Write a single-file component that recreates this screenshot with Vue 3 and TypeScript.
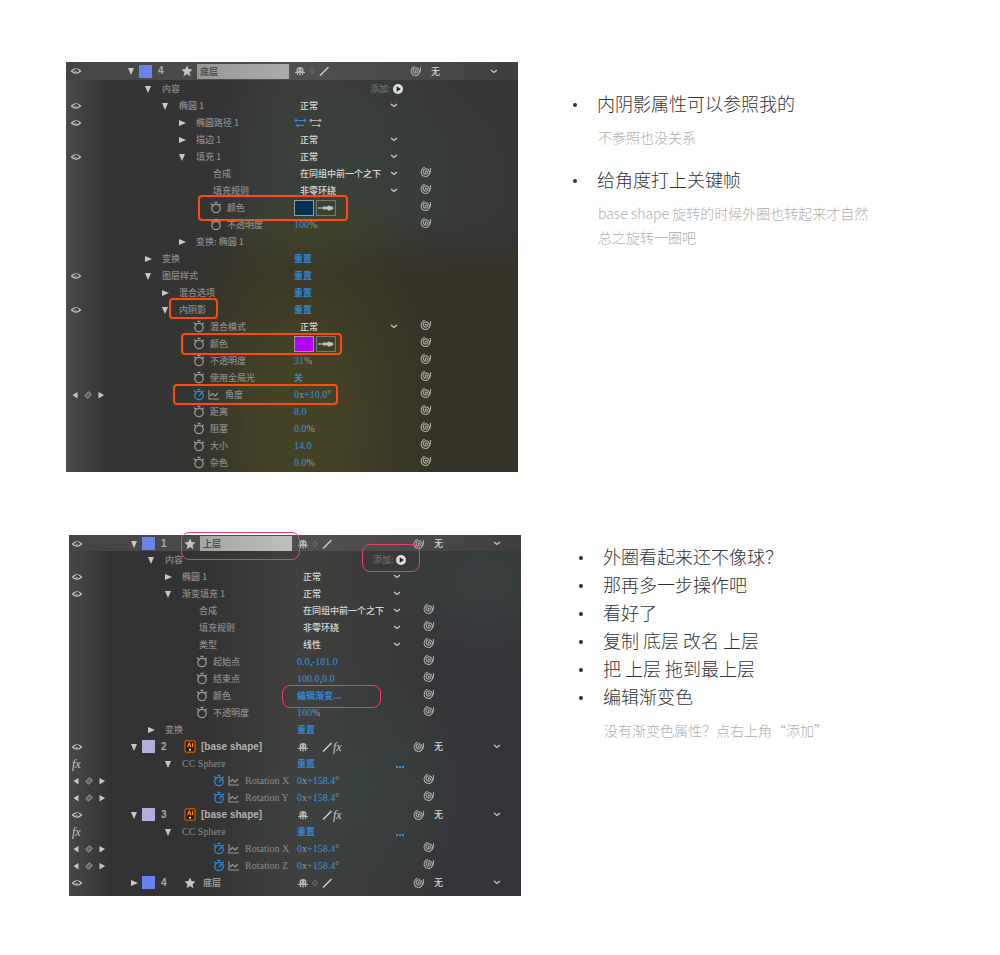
<script setup lang="ts">
interface Row {
  kind: 'layer' | 'prop'
  label: string
  level?: number
  eye?: boolean
  fx?: boolean
  keys?: boolean
  arrow?: 'open' | 'closed'
  watch?: 'off' | 'on'
  value?: string
  valueKind?: 'select' | 'link' | 'number' | 'color' | 'path' | 'add'
  color?: 'navy' | 'purple'
  spiral?: boolean
  dots?: boolean
  latin?: boolean
  mark?: string
  num?: string
  icon?: 'star' | 'ai'
  swatch?: 'blue' | 'lavender'
  field?: boolean
  faint?: boolean
}

interface Run { text: string; unit: boolean }

const spiralPath = 'M6 6.300c-.8.300-1.200-.9-.2-1.200 1.500-.4 2.400 1.800.8 2.700-1.900 1-3.900-.8-3.400-2.800.5-1.900 3-2.700 4.700-1.500 2 1.400 1.900 4.700-.1 6.200-2 1.400-5.200.8-6.300-1.600C.4 5.500 1.900 2 4.800 1.300M8.500 9c1.600-1.400 2.400-3.800 2-7'

const prop = (level: number, label: string, more: Partial<Row> = {}): Row => ({ kind: 'prop', level, label, ...more })
const layer = (num: string, label: string, more: Partial<Row> = {}): Row => ({ kind: 'layer', num, label, eye: true, ...more })
const sel = (value: string): Partial<Row> => ({ valueKind: 'select', value })
const link = (value: string): Partial<Row> => ({ valueKind: 'link', value })
const num = (value: string): Partial<Row> => ({ valueKind: 'number', value, watch: 'off', spiral: true })

const base: Row[] = [
  layer('4', '底层', { arrow: 'open', icon: 'star', swatch: 'blue', field: true, faint: true }),
  prop(1, '内容', { arrow: 'open', valueKind: 'add' }),
  prop(2, '椭圆 1', { eye: true, arrow: 'open', ...sel('正常') }),
  prop(3, '椭圆路径 1', { eye: true, arrow: 'closed', valueKind: 'path' }),
  prop(3, '描边 1', { arrow: 'closed', ...sel('正常') }),
  prop(3, '填充 1', { eye: true, arrow: 'open', ...sel('正常') }),
  prop(4, '合成', { ...sel('在同组中前一个之下'), spiral: true }),
  prop(4, '填充规则', { ...sel('非零环绕'), spiral: true }),
  prop(4, '颜色', { watch: 'off', valueKind: 'color', color: 'navy', spiral: true, mark: 'm-fill' }),
  prop(4, '不透明度', num('100%')),
  prop(3, '变换: 椭圆 1', { arrow: 'closed' }),
  prop(1, '变换', { arrow: 'closed', ...link('重置') }),
  prop(1, '图层样式', { eye: true, arrow: 'open', ...link('重置') }),
  prop(2, '混合选项', { arrow: 'closed', ...link('重置') }),
  prop(2, '内阴影', { eye: true, arrow: 'open', ...link('重置'), mark: 'm-shadow' }),
  prop(3, '混合模式', { watch: 'off', ...sel('正常'), spiral: true }),
  prop(3, '颜色', { watch: 'off', valueKind: 'color', color: 'purple', spiral: true, mark: 'm-tint' }),
  prop(3, '不透明度', num('31%')),
  prop(3, '使用全局光', { watch: 'off', ...link('关'), spiral: true }),
  prop(3, '角度', { ...num('0x+10.0°'), keys: true, watch: 'on', mark: 'm-angle' }),
  prop(3, '距离', num('8.0')),
  prop(3, '阻塞', num('0.0%')),
  prop(3, '大小', num('14.0')),
  prop(3, '杂色', num('0.0%')),
]

const rotation = (axis: string): Row => prop(4, 'Rotation ' + axis, { ...num('0x+158.4°'), keys: true, watch: 'on', latin: true })
const sphere = (): Row => prop(2, 'CC Sphere', { fx: true, arrow: 'open', ...link('重置'), dots: true, latin: true })

const top: Row[] = [
  layer('1', '上层', { arrow: 'open', icon: 'star', swatch: 'blue', field: true, faint: true, mark: 'm-name' }),
  prop(1, '内容', { arrow: 'open', valueKind: 'add', mark: 'm-add' }),
  prop(2, '椭圆 1', { eye: true, arrow: 'closed', ...sel('正常') }),
  prop(2, '渐变填充 1', { eye: true, arrow: 'open', ...sel('正常') }),
  prop(3, '合成', { ...sel('在同组中前一个之下'), spiral: true }),
  prop(3, '填充规则', { ...sel('非零环绕'), spiral: true }),
  prop(3, '类型', { ...sel('线性'), spiral: true }),
  prop(3, '起始点', num('0.0,-181.0')),
  prop(3, '结束点', num('100.0,0.0')),
  prop(3, '颜色', { watch: 'off', ...link('编辑渐变...'), spiral: true, mark: 'm-gradient' }),
  prop(3, '不透明度', num('100%')),
  prop(1, '变换', { arrow: 'closed', ...link('重置') }),
  layer('2', '[base shape]', { arrow: 'open', icon: 'ai', swatch: 'lavender', fx: true }),
  sphere(),
  rotation('X'),
  rotation('Y'),
  layer('3', '[base shape]', { arrow: 'open', icon: 'ai', swatch: 'lavender', fx: true }),
  sphere(),
  rotation('X'),
  rotation('Z'),
  layer('4', '底层', { arrow: 'closed', icon: 'star', swatch: 'blue', faint: true }),
]

const runs = (value: string): Run[] =>
  (value.match(/[x%°,]|[^x%°,]+/g) ?? []).map((text) => ({ text, unit: /[x%°,]/.test(text) }))

const sections = [
  {
    name: 'base',
    rows: base,
    notes: [
      { title: '内阴影属性可以参照我的', lines: ['不参照也没关系'] },
      { title: '给角度打上关键帧', lines: ['base shape 旋转的时候外圈也转起来才自然', '总之旋转一圈吧'] },
    ],
  },
  {
    name: 'top',
    rows: top,
    notes: [
      { title: '外圈看起来还不像球？', lines: [] as string[] },
      { title: '那再多一步操作吧', lines: [] },
      { title: '看好了', lines: [] },
      { title: '复制 底层 改名 上层', lines: [] },
      { title: '把 上层 拖到最上层', lines: [] },
      { title: '编辑渐变色', lines: ['没有渐变色属性？点右上角“添加”'] },
    ],
  },
]
</script>

<template>
  <main class="page">
    <section v-for="s in sections" :key="s.name" class="section" :class="s.name">
      <div class="panel">
        <div v-for="(r, i) in s.rows" :key="i" class="row" :class="[r.kind, { first: i === 0 }]">
          <div class="gutter">
            <button v-if="r.eye" type="button" class="eye" aria-label="显示">
              <svg viewBox="0 0 12 8" width="12" height="8"><path d="M1.500 4Q6-.5 10.500 4 6 8.500 1.500 4Z" fill="none" stroke="currentColor" stroke-width="1.100" /><circle cx="6.300" cy="3.600" r="1.500" fill="#333" /><path d="M5 3.500a1.300 1.300 0 002 1.300" fill="none" stroke="currentColor" /></svg>
            </button>
            <span v-else-if="r.fx" class="fx">fx</span>
            <template v-else-if="r.keys">
              <button type="button" aria-label="上一关键帧"><svg viewBox="0 0 8 8" width="8" height="8"><path d="M6.500 1v6.500L1.500 4z" fill="currentColor" /></svg></button>
              <button type="button" aria-label="关键帧"><svg viewBox="0 0 8 8" width="8" height="8"><path d="M4.500.8l2.800 2.700-3.600 3.700L.8 4.500z" fill="#606060" stroke="#a0a0a0" /></svg></button>
              <button type="button" aria-label="下一关键帧"><svg viewBox="0 0 8 8" width="8" height="8"><path d="M1.500 1v6.500L7 4z" fill="currentColor" /></svg></button>
            </template>
          </div>

          <template v-if="r.kind === 'layer'">
            <button type="button" class="twisty" aria-label="展开">
              <svg viewBox="0 0 10 8" width="10" height="8"><path :d="r.arrow === 'open' ? 'M2 1h6L5 8z' : 'M2 1v6l7-3z'" fill="currentColor" /></svg>
            </button>
            <span class="swatch" :class="r.swatch"></span>
            <span class="num">{{ r.num }}</span>
            <svg v-if="r.icon === 'star'" class="kind" viewBox="0 0 12 12" width="12" height="12"><path d="M6 .5l1.600 3.600 3.900.4-2.900 2.700.9 4L6 9.100l-3.500 2.100.9-4L.5 4.500l3.900-.4z" fill="#c4c4c4" /></svg>
            <svg v-else class="kind" viewBox="0 0 12 13" width="12" height="13"><rect x="1" y="0.800" width="10" height="11.400" rx="1.500" fill="#301800" stroke="#b0580f" stroke-width="1.400" /><path d="M3.500 7l1.800-4 1.500 4M8.500 3v4" fill="none" stroke="#ff8f1c" stroke-width="1.200" /><circle cx="6" cy="9.800" r="1" fill="#eee" /></svg>
            <input v-if="r.field" class="name" type="text" :value="r.label" aria-label="图层名称" />
            <span v-else class="title" :class="r.icon">{{ r.label }}</span>
            <span class="switches">
              <svg viewBox="0 0 12 10" width="12" height="10"><path d="M2.500 6V4a3.500 3 0 017 0v2z" fill="#b0b0b0" /><path d="M1 6.500h10M6 1v8.500M3.500 9V7M8.500 9V7" stroke="#b8b8b8" stroke-width="1.200" /><path d="M4 4h1.200M7 4h1.200" stroke="#333" stroke-width="1.200" /></svg>
              <svg viewBox="0 0 12 10" width="12" height="10"><path v-if="r.faint" d="M6 2l1 2 2 1-2 1-1 2-1-2-2-1 2-1z" fill="none" stroke="#666" /></svg>
              <svg viewBox="0 0 12 10" width="12" height="10"><path d="M2 9.500L10.500 1" stroke="#ccc" stroke-width="1.500" /></svg>
              <span v-if="r.fx" class="fx">fx</span>
            </span>
            <span></span>
            <svg class="spiral" viewBox="0 0 12 12" width="12" height="12"><path :d="spiralPath" fill="none" stroke="currentColor" stroke-width="1.100" /></svg>
            <label class="drop parent">
              <select aria-label="父级"><option>无</option></select>
              <svg viewBox="0 0 8 5" width="8" height="5"><path d="M1 1l3 2.500L7 1" fill="none" stroke="currentColor" stroke-width="1.300" /></svg>
            </label>
          </template>

          <template v-else>
            <div class="tree" :class="'l' + r.level">
              <button v-if="r.arrow" type="button" class="twisty" aria-label="展开">
                <svg viewBox="0 0 10 8" width="10" height="8"><path :d="r.arrow === 'open' ? 'M2 1h6L5 8z' : 'M2 1v6l7-3z'" fill="currentColor" /></svg>
              </button>
              <span v-else-if="!r.watch" class="indent"></span>
              <template v-if="r.watch">
                <button type="button" class="watch" :class="r.watch" aria-label="时间变化秒表">
                  <svg viewBox="0 0 12 13" width="12" height="13"><circle cx="6" cy="7.500" r="4.200" fill="none" stroke="currentColor" stroke-width="1.300" /><path d="M4.500 1.500h3M1 2.500l2 2M10.800 2.800L9 4.500" fill="none" stroke="currentColor" stroke-width="1.300" /><path v-if="r.watch === 'on'" d="M6 8l2.500-3" stroke="currentColor" stroke-width="1.200" /></svg>
                </button>
                <svg v-if="r.watch === 'on'" class="graph" viewBox="0 0 11 10" width="11" height="10"><path d="M1 0v9h10M2 6l2.500-2.500L7 6l3-3" fill="none" stroke="#999" stroke-width="1.100" /></svg>
              </template>
              <span class="label" :class="{ latin: r.latin }">{{ r.label }}</span>
            </div>
            <div class="value">
              <label v-if="r.valueKind === 'select'" class="drop">
                <select :aria-label="r.label"><option>{{ r.value }}</option></select>
                <svg viewBox="0 0 8 5" width="8" height="5"><path d="M1 1l3 2.500L7 1" fill="none" stroke="currentColor" stroke-width="1.300" /></svg>
              </label>
              <template v-else-if="r.valueKind === 'link'">
                <a href="#" class="link" @click.prevent>{{ r.value }}</a>
                <span v-if="r.dots" class="dots"><i></i><i></i><i></i></span>
              </template>
              <span v-else-if="r.valueKind === 'number'" class="number"><span v-for="(p, k) in runs(r.value ?? '')" :key="k" :class="{ unit: p.unit }">{{ p.text }}</span></span>
              <template v-else-if="r.valueKind === 'color'">
                <button type="button" class="well" :class="r.color" aria-label="颜色"></button>
                <button type="button" class="well picker" aria-label="吸管">
                  <svg viewBox="0 0 16 8" width="16" height="8"><path d="M0 4h8" stroke="#aaa" stroke-width="1.500" /><path d="M5 2.500h5V1.500q4 0 6 2.500-2 2.500-6 2.500V5.500H5z" fill="#c0c0c0" /></svg>
                </button>
              </template>
              <svg v-else-if="r.valueKind === 'path'" class="path" viewBox="0 0 30 10" width="30" height="10"><g fill="#2b86e8" stroke="#2b86e8"><path d="M2 2.500h9M3 7.500h7" /><circle cx="2" cy="2.500" r="1" /><circle cx="11" cy="2.500" r="1" /><circle cx="3.500" cy="7.500" r="1" /></g><g fill="#aaa" stroke="#aaa"><path d="M17 2.500h10M18 7.500h8" /><circle cx="17" cy="2.500" r="1" /><circle cx="26" cy="2.500" r="1" /><circle cx="25" cy="7.500" r="1" /></g></svg>
              <button v-else-if="r.valueKind === 'add'" type="button" class="add">
                <span>添加:</span>
                <svg viewBox="0 0 10 10" width="10" height="10"><circle cx="5" cy="5" r="5" fill="#ddd" /><path d="M3.700 2.300v5.400L7.800 5z" fill="#222" /></svg>
              </button>
            </div>
            <svg v-if="r.spiral" class="spiral" viewBox="0 0 12 12" width="12" height="12"><path :d="spiralPath" fill="none" stroke="currentColor" stroke-width="1.100" /></svg>
          </template>
          <span v-if="r.mark" class="mark" :class="r.mark"></span>
        </div>
      </div>

      <ul class="notes">
        <li v-for="n in s.notes" :key="n.title">
          <p class="note">{{ n.title }}</p>
          <div v-if="n.lines.length" class="subs">
            <p v-for="l in n.lines" :key="l" class="sub">{{ l }}</p>
          </div>
        </li>
      </ul>
    </section>
  </main>
</template>

<style>
body {
  margin: 0;
  background: #fff;
}
</style>

<style scoped>
.page {
  padding: 62px 66px 59px;
  font-family: "Noto Sans CJK SC", sans-serif;
}
.section {
  display: grid;
  grid-template-columns: minmax(0, 452px) minmax(0, 1fr);
  column-gap: 53px;
  align-items: start;
}
.section.top {
  margin-top: 63px;
  padding-left: 3px;
  column-gap: 56px;
}
.panel {
  color: #c8c8c8;
  font-size: 9px;
  line-height: 17px;
  padding-bottom: 1px;
  background:
    linear-gradient(90deg, #4a4a4a, #42424200 40px),
    linear-gradient(90deg, #343434 24%, #34343400 40%),
    radial-gradient(ellipse 30% 55% at 52% 88%, #454325 20%, #45432500 100%),
    radial-gradient(ellipse 22% 10% at 56% 40%, #3c4127, #3c412700),
    linear-gradient(180deg, #35332500 38%, #353325 52%),
    radial-gradient(ellipse 35% 28% at 62% 28%, #37423bcc, #37423b00),
    linear-gradient(90deg, #343434 35%, #3d3e3c 50%, #37373a 85%);
}
.top .panel {
  padding-bottom: 5px;
  background:
    linear-gradient(90deg, #484848, #42424200 40px),
    radial-gradient(ellipse 28% 35% at 65% 70%, #374542aa, #37454200),
    radial-gradient(ellipse 25% 25% at 92% 12%, #3a4643aa, #3a464300),
    linear-gradient(90deg, #333 30%, #40403e 50%, #353438 85%);
}
.row {
  position: relative;
  display: grid;
  grid-template-columns: 58px 170px 118px 1fr;
  align-items: center;
  height: 17px;
}
.row.layer {
  grid-template-columns: 60px 13px 13px 29px 16px 97px 48px 68px 21px 69px;
}
.row.first {
  height: 18px;
  background: linear-gradient(90deg, #444, #505050 50%, #484848 80%, #3f3f3f);
}
.top .row.first {
  height: 16px;
}
button {
  display: flex;
  align-items: center;
  padding: 0;
  border: 0;
  background: none;
  color: inherit;
  font: inherit;
}
svg {
  display: block;
}
.gutter {
  display: flex;
  align-items: center;
  gap: 5px;
  padding-left: 5px;
}
.top .gutter {
  padding-left: 3px;
}
.eye {
  margin-left: -1px;
}
.fx {
  font: italic 12px/16px "Liberation Serif", serif;
}
.tree {
  display: flex;
  align-items: center;
  white-space: nowrap;
}
.l1 { padding-left: 19px; }
.l2 { padding-left: 36px; }
.l3 { padding-left: 53px; }
.l4 { padding-left: 70px; }
.tree .twisty,
.indent {
  width: 19px;
}
.watch {
  margin-left: 16px;
  margin-right: 5px;
  color: #999;
}
.watch.on {
  margin-right: 3px;
  color: #2f86dc;
}
.graph {
  margin-right: 6px;
}
.label {
  color: #8a8a8a;
  font-weight: 500;
}
.label.latin {
  font-family: "Liberation Serif", serif;
  font-size: 10px;
  font-weight: 400;
}
.value {
  display: flex;
  align-items: center;
}
.drop {
  display: flex;
  align-items: center;
  width: 98px;
  margin-left: 6px;
}
.drop.parent {
  width: 67px;
  margin-left: 0;
}
select {
  flex: 1;
  min-width: 0;
  height: 17px;
  padding: 0;
  border: 0;
  background: none;
  color: #d8d8d8;
  font: 500 9px/17px "Noto Sans CJK SC", sans-serif;
  appearance: none;
}
.link {
  color: #3286d2;
  font-weight: 700;
  text-decoration: none;
}
.number {
  color: #3290e6;
  font-family: "Liberation Serif", serif;
  font-size: 10px;
}
.unit {
  color: #999;
}
.dots {
  display: flex;
  gap: 1px;
  margin: 7px 0 0 auto;
  padding-right: 11px;
}
.dots i {
  width: 2px;
  height: 2px;
  background: #3a8fdc;
}
.well {
  box-sizing: border-box;
  width: 20px;
  height: 16px;
  margin-right: 2px;
  justify-content: center;
  border: 1px solid #999;
}
.navy { background: #043353; }
.purple { background: #b400ff; }
.picker { border-color: #777; }
.add {
  margin-left: 76px;
  gap: 2px;
  color: #777;
}
.spiral {
  margin: -4px 0 0 8px;
  color: #a8a8a8;
}
.layer .spiral {
  margin: 0;
}
.swatch {
  height: 13px;
}
.blue { background: #6b82ee; }
.lavender { background: #b1afdc; }
.num {
  padding-left: 6px;
  font: 700 10px/16px "Liberation Sans", sans-serif;
  color: #aaa;
}
.name {
  box-sizing: border-box;
  width: 92px;
  height: 15px;
  padding: 0 3px;
  border: 0;
  background: linear-gradient(90deg, #969696, #acacac);
  color: #505050;
  font: 700 9px/15px "Noto Sans CJK SC", sans-serif;
}
.top .name {
  background: linear-gradient(90deg, #a2a5a0, #bcbfba);
}
.title {
  padding-left: 3px;
  color: #999;
  font-weight: 700;
}
.title.ai {
  padding-left: 1px;
  font: 700 10px/16px "Liberation Sans", sans-serif;
  color: #b0b0b0;
}
.switches {
  display: flex;
  align-items: center;
}
.mark {
  position: absolute;
  box-sizing: border-box;
  border: 2px solid #ff4a08;
  border-radius: 4px;
  pointer-events: none;
}
.m-fill { left: 132px; top: -4px; width: 150px; height: 26px; }
.m-shadow { left: 103px; top: -3px; width: 49px; height: 21px; }
.m-tint { left: 115px; top: -2px; width: 161px; height: 22px; }
.m-angle { left: 107px; top: -2px; width: 165px; height: 21px; }
.m-name,
.m-add,
.m-gradient {
  border: 1px solid #ea4266;
  border-radius: 8px;
}
.m-name { left: 112px; top: -3px; width: 119px; height: 28px; }
.m-add { left: 293px; top: -7px; width: 58px; height: 28px; }
.m-gradient { left: 213px; top: -2px; width: 99px; height: 23px; }
.notes {
  margin: 0;
  padding: 27px 0 0;
  list-style: none;
  color: #333;
}
.top .notes {
  padding-top: 7px;
}
.notes li {
  position: relative;
  padding-left: 26px;
}
.notes li::before {
  content: "";
  position: absolute;
  left: 2px;
  top: 14px;
  width: 4px;
  height: 4px;
  border-radius: 50%;
  background: #333;
}
p {
  margin: 0;
}
.note {
  font-size: 18px;
  line-height: 28px;
  font-weight: 300;
}
.subs {
  padding: 8px 0 16px 1px;
}
.sub {
  color: #b0b0b0;
  font-size: 14px;
  line-height: 24px;
  font-weight: 300;
}
</style>
